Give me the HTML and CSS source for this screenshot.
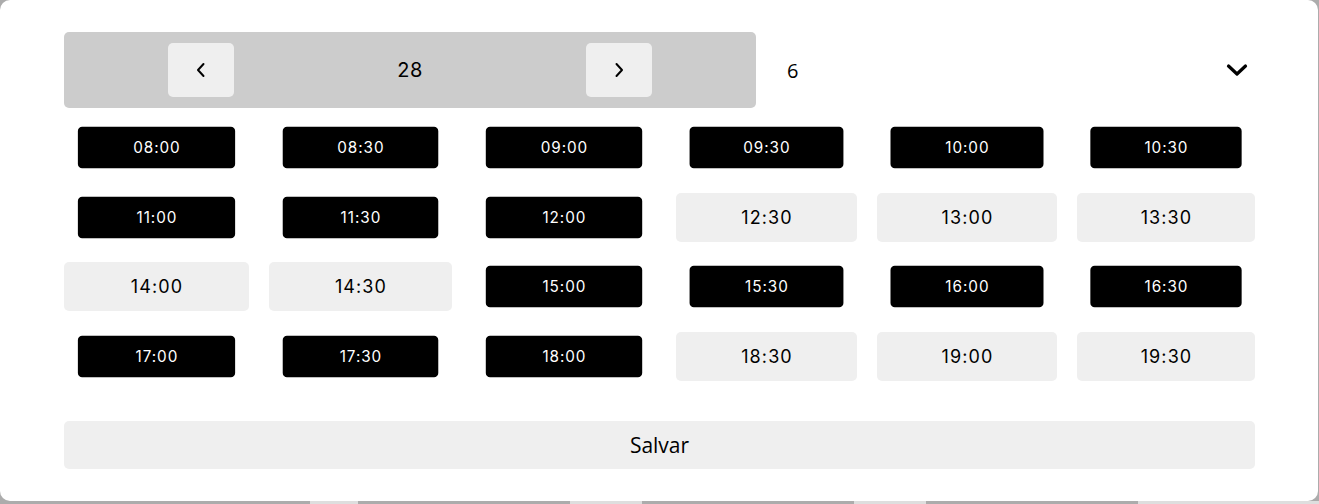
FILE: index.html
```html
<!DOCTYPE html>
<html lang="pt">
<head>
<meta charset="utf-8">
<title>Horários</title>
<link rel="stylesheet" href="styles.css">
</head>
<body>
<div class="modal">
  <div class="header">
    <div class="day-nav">
      <button class="nav-btn" aria-label="Anterior">
        <svg width="12" height="16" viewBox="0 0 12 16"><path d="M8.5 2 L3 8 L8.5 14" fill="none" stroke="#000" stroke-width="2" stroke-linecap="round" stroke-linejoin="round"/></svg>
      </button>
      <span class="day">28</span>
      <button class="nav-btn" aria-label="Próximo">
        <svg width="12" height="16" viewBox="0 0 12 16"><path d="M3.5 2 L9 8 L3.5 14" fill="none" stroke="#000" stroke-width="2" stroke-linecap="round" stroke-linejoin="round"/></svg>
      </button>
    </div>
    <div class="month-select">
      <span class="month">6</span>
      <svg class="chev" width="22" height="16" viewBox="0 0 22 16"><path d="M2.5 4 L11 12 L19.5 4" fill="none" stroke="#000" stroke-width="3.2" stroke-linecap="round" stroke-linejoin="round"/></svg>
    </div>
  </div>
  <div class="slots">
    <div class="slot sel">08:00</div>
    <div class="slot sel">08:30</div>
    <div class="slot sel">09:00</div>
    <div class="slot sel">09:30</div>
    <div class="slot sel">10:00</div>
    <div class="slot sel">10:30</div>
    <div class="slot sel">11:00</div>
    <div class="slot sel">11:30</div>
    <div class="slot sel">12:00</div>
    <div class="slot">12:30</div>
    <div class="slot">13:00</div>
    <div class="slot">13:30</div>
    <div class="slot">14:00</div>
    <div class="slot">14:30</div>
    <div class="slot sel">15:00</div>
    <div class="slot sel">15:30</div>
    <div class="slot sel">16:00</div>
    <div class="slot sel">16:30</div>
    <div class="slot sel">17:00</div>
    <div class="slot sel">17:30</div>
    <div class="slot sel">18:00</div>
    <div class="slot">18:30</div>
    <div class="slot">19:00</div>
    <div class="slot">19:30</div>
  </div>
  <button class="save">Salvar</button>
</div>
<div class="backdrop">
  <span class="bd b1"></span>
  <span class="bd b2"></span>
  <span class="bd b3"></span>
  <span class="bd b5"></span>
</div>
</body>
</html>
```

FILE: styles.css
```css
* { box-sizing: border-box; }
html, body { margin: 0; padding: 0; }
body {
  background: #acacac;
  width: 1319px;
  height: 504px;
  overflow: hidden;
  font-family: "Inter", "Open Sans", sans-serif;
}
.modal {
  width: 1318px;
  height: 501px;
  background: #fff;
  border-radius: 10px;
  padding: 32px 63px 0 64px;
  display: flex;
  flex-direction: column;
}
.header {
  display: flex;
  height: 76px;
}
.day-nav {
  width: 692px;
  background: #cccccc;
  border-radius: 5px;
  display: flex;
  align-items: center;
  padding-left: 104px;
}
.nav-btn {
  width: 66px;
  height: 54px;
  border: none;
  background: #efefef;
  border-radius: 5px;
  display: flex;
  align-items: center;
  justify-content: center;
  padding: 0;
}
.day {
  width: 352px;
  text-align: center;
  font-size: 20px;
  letter-spacing: 0.5px;
  color: #000;
}
.month-select {
  flex: 1;
  display: flex;
  align-items: center;
  justify-content: space-between;
  padding: 0 7px 0 31px;
}
.month {
  font-family: "Open Sans", sans-serif;
  font-size: 20px;
  color: #000;
}
.slots {
  margin-top: 15px;
  display: grid;
  grid-template-columns: 185px 183px 184px 181px 180px 178px;
  grid-auto-rows: 49px;
  column-gap: 20px;
  row-gap: 20.5px;
}
.slot {
  background: #efefef;
  border-radius: 5px;
  display: flex;
  align-items: center;
  justify-content: center;
  font-size: 18px;
  color: #000;
  letter-spacing: 1.1px;
  padding-left: 1px;
}
.slot.sel {
  background: #000;
  color: #fff;
  transform: scale(0.85);
}
.save {
  margin-top: 40px;
  height: 48px;
  width: 100%;
  border: none;
  border-radius: 5px;
  background: #efefef;
  font-family: "Open Sans", sans-serif;
  font-size: 21px;
  color: #000;
}
.backdrop {
  display: flex;
  height: 3px;
}
.bd { display: block; height: 3px; background: #dedede; }
.b1 { margin-left: 310px; width: 48px; }
.b2 { margin-left: 212px; width: 72px; }
.b3 { margin-left: 212px; width: 72px; }
.b5 { margin-left: 212px; width: 181px; }
```
